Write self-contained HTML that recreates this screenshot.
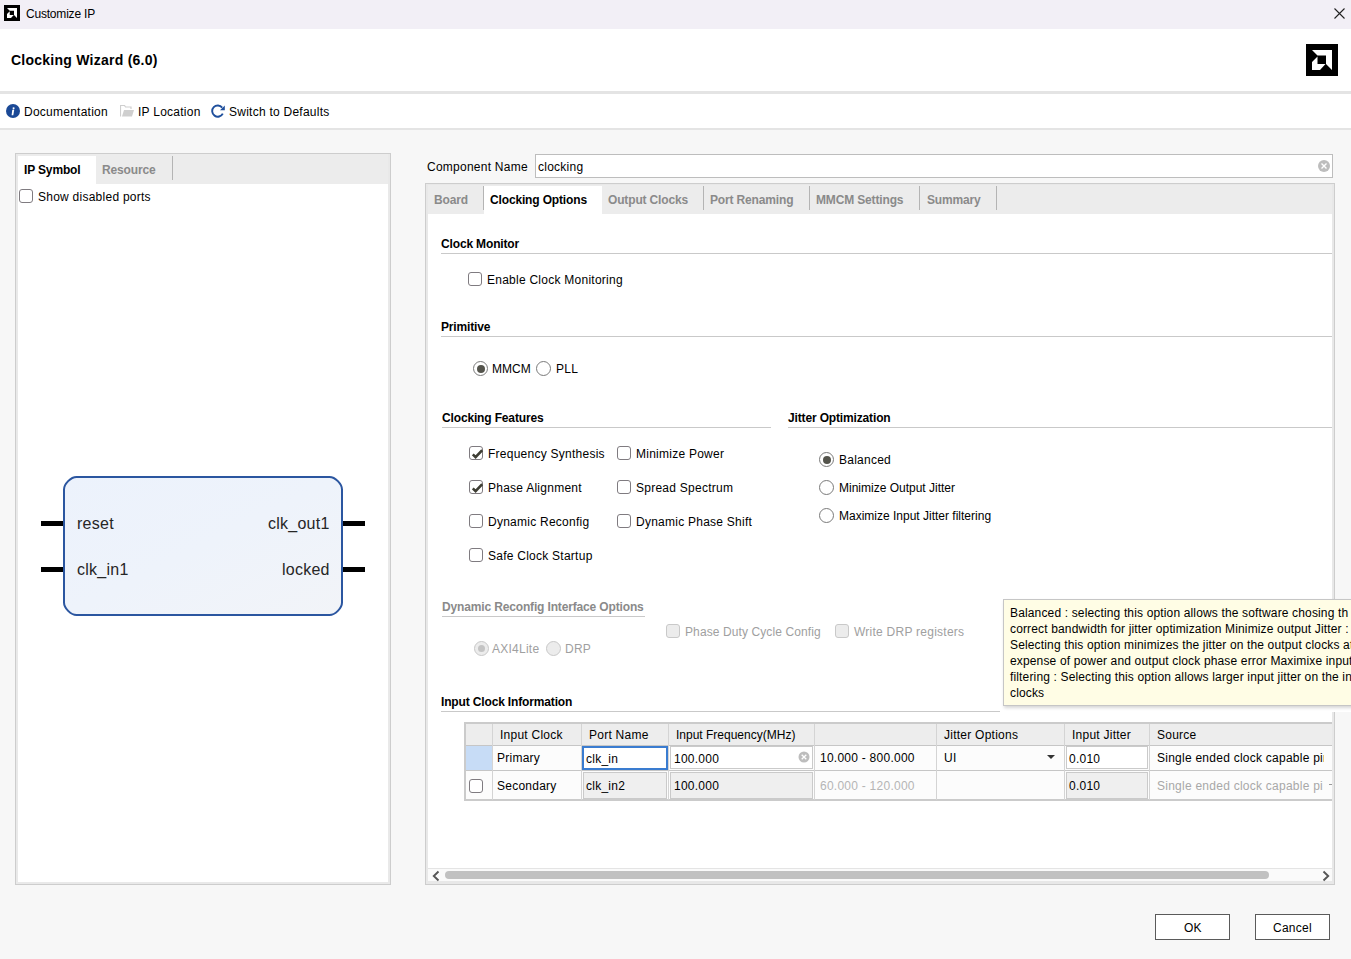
<!DOCTYPE html>
<html><head><meta charset="utf-8">
<style>
*{margin:0;padding:0;box-sizing:border-box}
html,body{width:1351px;height:959px;overflow:hidden;background:#f7f7f7;font-family:"Liberation Sans",sans-serif;font-size:12px;color:#000}
.a{position:absolute}
.t{position:absolute;white-space:nowrap;line-height:12px;font-size:12px;letter-spacing:0.25px}
.b{font-weight:bold;letter-spacing:-0.15px}
.g{color:#8a8a8a}
.cb{position:absolute;width:14px;height:14px;border:1px solid #7f7b80;border-radius:3px;background:#fff}
.cbd{position:absolute;width:14px;height:14px;border:1px solid #c9c9c9;border-radius:3px;background:#ececec}
.rd{position:absolute;width:15px;height:15px;border:1px solid #7a7a7a;border-radius:50%;background:#fff}
.rdd{position:absolute;width:15px;height:15px;border:1px solid #c8c8c8;border-radius:50%;background:#ececec}
.hl{position:absolute;height:1px;background:#c9c9c9}
.vs{position:absolute;width:1px;background:#b4b4b4}
</style></head><body>
<!-- title bar -->
<div class="a" style="left:0;top:0;width:1351px;height:29px;background:#f2eff6"></div>
<svg class="a" style="left:4px;top:5px" width="16" height="16" viewBox="0 0 32 32"><rect width="32" height="32" fill="#000"/><path d="M6 6H26V26L20 20V11.5H11.5Z" fill="#fff"/><path d="M6 18L11.5 12.5V20H19.5L14 26H6Z" fill="#fff"/></svg>
<div class="t" style="left:26px;top:8px;font-size:12px;letter-spacing:-0.2px">Customize IP</div>
<svg class="a" style="left:1334px;top:7.5px" width="11" height="11" viewBox="0 0 11 11"><path d="M0.5 0.5L10.5 10.5M10.5 0.5L0.5 10.5" stroke="#222" stroke-width="1.1"/></svg>
<!-- header -->
<div class="a" style="left:0;top:29px;width:1351px;height:62px;background:#fff"></div>
<div class="t b" style="left:11px;top:53px;font-size:14px;line-height:14px;letter-spacing:0.25px">Clocking Wizard (6.0)</div>
<svg class="a" style="left:1306px;top:44px" width="32" height="32" viewBox="0 0 32 32"><rect width="32" height="32" fill="#000"/><path d="M6 6H26V26L20 20V11.5H11.5Z" fill="#fff"/><path d="M6 18L11.5 12.5V20H19.5L14 26H6Z" fill="#fff"/></svg>
<div class="a" style="left:0;top:91px;width:1351px;height:3px;background:#e4e4e4"></div>
<!-- toolbar -->
<div class="a" style="left:0;top:94px;width:1351px;height:34px;background:#fff"></div>
<div class="a" style="left:0;top:128px;width:1351px;height:2px;background:#e4e4e4"></div>
<svg class="a" style="left:6px;top:104px" width="14" height="14" viewBox="0 0 14 14"><circle cx="7" cy="7" r="7" fill="#1b4996"/><path d="M7.6 3.2a1 1 0 1 0 0.01 0Z" fill="#fff"/><path d="M6.3 5.8H8.2L7.3 11.2H5.6Z" fill="#fff"/></svg>
<div class="t" style="left:24px;top:106px">Documentation</div>
<svg class="a" style="left:120px;top:105px" width="14" height="12" viewBox="0 0 14 12"><path d="M0.5 11.5V0.5H4.5L5.5 2H11V4" fill="none" stroke="#cfcfcf" stroke-width="1.2"/><path d="M2 11.5L4 5H14L12 11.5Z" fill="#cfcfcf"/></svg>
<div class="t" style="left:138px;top:106px">IP Location</div>
<svg class="a" style="left:211px;top:104px" width="14" height="14" viewBox="0 0 14 14"><path d="M11.8 9.6A5.6 5.6 0 1 1 11.2 3.6" fill="none" stroke="#1f4f9c" stroke-width="1.9"/><path d="M13.8 1.5V6.3H9.0Z" fill="#1f4f9c"/></svg>
<div class="t" style="left:229px;top:106px">Switch to Defaults</div>

<!-- left panel -->
<div class="a" style="left:15px;top:153px;width:376px;height:732px;border:1px solid #cdcdcd;background:#e9e9e9"></div>
<div class="a" style="left:18px;top:156px;width:370px;height:726px;background:#fff"></div>
<div class="a" style="left:18px;top:154px;width:370px;height:30px;background:#ececec"></div>
<div class="a" style="left:18px;top:156px;width:78px;height:28px;background:#fff"></div>
<div class="vs" style="left:172px;top:156px;height:24px"></div>
<div class="t b" style="left:24px;top:164px">IP Symbol</div>
<div class="t b g" style="left:102px;top:164px">Resource</div>
<div class="cb" style="left:19px;top:189px"></div>
<div class="t" style="left:38px;top:191px">Show disabled ports</div>
<!-- symbol -->
<div class="a" style="left:41px;top:521px;width:23px;height:5px;background:#000"></div>
<div class="a" style="left:41px;top:567px;width:23px;height:5px;background:#000"></div>
<div class="a" style="left:341px;top:521px;width:24px;height:5px;background:#000"></div>
<div class="a" style="left:341px;top:567px;width:24px;height:5px;background:#000"></div>
<svg class="a" style="left:60px;top:473px" width="290" height="146" viewBox="0 0 290 146"><defs><linearGradient id="bx" x1="0" y1="0" x2="1" y2="1"><stop offset="0" stop-color="#ecf2fc"/><stop offset="0.5" stop-color="#eef3fb"/><stop offset="1" stop-color="#f2f4f8"/></linearGradient></defs><path d="M16.5 4H269.5C275.125 4 282 10.875 282 16.5V129.5C282 135.125 275.125 142 269.5 142H16.5C10.875 142 4 135.125 4 129.5V16.5C4 10.875 10.875 4 16.5 4Z" fill="url(#bx)" stroke="#2b56a0" stroke-width="2"/></svg>
<div class="t" style="left:77px;top:516px;font-size:16px;line-height:16px;color:#262626">reset</div>
<div class="t" style="left:77px;top:562px;font-size:16px;line-height:16px;color:#262626">clk_in1</div>
<div class="t" style="left:268px;top:516px;font-size:16px;line-height:16px;color:#262626">clk_out1</div>
<div class="t" style="left:282px;top:562px;font-size:16px;line-height:16px;color:#262626">locked</div>

<!-- component name -->
<div class="t" style="left:427px;top:161px">Component Name</div>
<div class="a" style="left:535px;top:154px;width:798px;height:24px;border:1px solid #bdbdbd;background:#fff"></div>
<div class="t" style="left:538px;top:161px">clocking</div>
<svg class="a" style="left:1318px;top:160px" width="12" height="12" viewBox="0 0 12 12"><circle cx="6" cy="6" r="6" fill="#bdbdbd"/><path d="M3.5 3.5L8.5 8.5M8.5 3.5L3.5 8.5" stroke="#fff" stroke-width="1.4"/></svg>

<!-- tab panel -->
<div class="a" style="left:425px;top:183px;width:910px;height:702px;border:1px solid #cdcdcd;background:#e8e8e8"></div>
<div class="a" style="left:428px;top:185px;width:904px;height:683px;background:#fff;overflow:hidden">
<div class="a" style="left:-428px;top:-185px;width:1351px;height:959px">
<!-- tab header -->
<div class="a" style="left:428px;top:185px;width:904px;height:29px;background:#ececec"></div>
<div class="a" style="left:484px;top:186px;width:118px;height:28px;background:#fff"></div>
<div class="vs" style="left:483px;top:186px;height:24px"></div>
<div class="vs" style="left:703px;top:186px;height:24px"></div>
<div class="vs" style="left:809px;top:186px;height:24px"></div>
<div class="vs" style="left:919px;top:186px;height:24px"></div>
<div class="vs" style="left:996px;top:186px;height:24px"></div>
<div class="t b g" style="left:434px;top:194px">Board</div>
<div class="t b" style="left:490px;top:194px">Clocking Options</div>
<div class="t b g" style="left:608px;top:194px">Output Clocks</div>
<div class="t b g" style="left:710px;top:194px">Port Renaming</div>
<div class="t b g" style="left:816px;top:194px">MMCM Settings</div>
<div class="t b g" style="left:927px;top:194px">Summary</div>

<!-- clock monitor -->
<div class="t b" style="left:441px;top:238px">Clock Monitor</div>
<div class="hl" style="left:441px;top:253px;width:900px"></div>
<div class="cb" style="left:468px;top:272px"></div>
<div class="t" style="left:487px;top:274px">Enable Clock Monitoring</div>

<!-- primitive -->
<div class="t b" style="left:441px;top:321px">Primitive</div>
<div class="hl" style="left:441px;top:336px;width:900px"></div>
<div class="rd" style="left:473px;top:361px"><div class="a" style="left:2.5px;top:2.5px;width:8px;height:8px;border-radius:50%;background:#54544c"></div></div>
<div class="t" style="left:492px;top:363px;letter-spacing:0">MMCM</div>
<div class="rd" style="left:536px;top:361px"></div>
<div class="t" style="left:556px;top:363px">PLL</div>

<!-- clocking features -->
<div class="t b" style="left:442px;top:412px">Clocking Features</div>
<div class="hl" style="left:442px;top:427px;width:329px"></div>
<div class="t b" style="left:788px;top:412px">Jitter Optimization</div>
<div class="hl" style="left:788px;top:427px;width:560px"></div>

<div class="cb" style="left:469px;top:446px"><svg class="a" style="left:1px;top:1px" width="12" height="12" viewBox="0 0 12 12"><path d="M1.8 6.3L4.6 9.2L11.2 2.2" fill="none" stroke="#3e3e34" stroke-width="2.6"/></svg></div>
<div class="t" style="left:488px;top:448px">Frequency Synthesis</div>
<div class="cb" style="left:469px;top:480px"><svg class="a" style="left:1px;top:1px" width="12" height="12" viewBox="0 0 12 12"><path d="M1.8 6.3L4.6 9.2L11.2 2.2" fill="none" stroke="#3e3e34" stroke-width="2.6"/></svg></div>
<div class="t" style="left:488px;top:482px">Phase Alignment</div>
<div class="cb" style="left:469px;top:514px"></div>
<div class="t" style="left:488px;top:516px">Dynamic Reconfig</div>
<div class="cb" style="left:469px;top:548px"></div>
<div class="t" style="left:488px;top:550px">Safe Clock Startup</div>
<div class="cb" style="left:617px;top:446px"></div>
<div class="t" style="left:636px;top:448px">Minimize Power</div>
<div class="cb" style="left:617px;top:480px"></div>
<div class="t" style="left:636px;top:482px">Spread Spectrum</div>
<div class="cb" style="left:617px;top:514px"></div>
<div class="t" style="left:636px;top:516px">Dynamic Phase Shift</div>

<div class="rd" style="left:819px;top:452px"><div class="a" style="left:2.5px;top:2.5px;width:8px;height:8px;border-radius:50%;background:#54544c"></div></div>
<div class="t" style="left:839px;top:454px">Balanced</div>
<div class="rd" style="left:819px;top:480px"></div>
<div class="t" style="left:839px;top:482px;letter-spacing:0">Minimize Output Jitter</div>
<div class="rd" style="left:819px;top:508px"></div>
<div class="t" style="left:839px;top:510px;letter-spacing:0">Maximize Input Jitter filtering</div>

<!-- dynamic reconfig -->
<div class="t b g" style="left:442px;top:601px">Dynamic Reconfig Interface Options</div>
<div class="hl" style="left:442px;top:616px;width:203px"></div>
<div class="rdd" style="left:474px;top:641px"><div class="a" style="left:3px;top:3px;width:7px;height:7px;border-radius:50%;background:#c4c4c4"></div></div>
<div class="t g" style="left:492px;top:643px;color:#a0a0a0">AXI4Lite</div>
<div class="rdd" style="left:546px;top:641px"></div>
<div class="t g" style="left:565px;top:643px;color:#a0a0a0">DRP</div>
<div class="cbd" style="left:666px;top:624px"></div>
<div class="t" style="left:685px;top:626px;color:#a0a0a0;letter-spacing:0.1px">Phase Duty Cycle Config</div>
<div class="cbd" style="left:835px;top:624px"></div>
<div class="t" style="left:854px;top:626px;color:#a0a0a0">Write DRP registers</div>

<!-- input clock info -->
<div class="t b" style="left:441px;top:696px">Input Clock Information</div>
<div class="hl" style="left:441px;top:711px;width:559px"></div>
<!-- table -->
<div class="a" style="left:464px;top:722px;width:880px;height:79px;border:2px solid #cbcbcb;border-right:none;background:#fcfcfc"></div>
<div class="a" style="left:466px;top:724px;width:880px;height:21px;background:#ededed"></div>
<div class="a" style="left:466px;top:745px;width:880px;height:1px;background:#c6c6c6"></div>
<div class="a" style="left:466px;top:770px;width:880px;height:1px;background:#c6c6c6"></div>
<div class="a" style="left:466px;top:746px;width:26px;height:24px;background:#c7dcf6"></div>
<div class="a" style="left:492px;top:724px;width:1px;height:76px;background:#d4d4d4"></div>
<div class="a" style="left:581px;top:724px;width:1px;height:76px;background:#d4d4d4"></div>
<div class="a" style="left:668px;top:724px;width:1px;height:76px;background:#d4d4d4"></div>
<div class="a" style="left:814px;top:724px;width:1px;height:76px;background:#d4d4d4"></div>
<div class="a" style="left:936px;top:724px;width:1px;height:76px;background:#d4d4d4"></div>
<div class="a" style="left:1064px;top:724px;width:1px;height:76px;background:#d4d4d4"></div>
<div class="a" style="left:1149px;top:724px;width:1px;height:76px;background:#d4d4d4"></div>
<div class="t" style="left:500px;top:729px">Input Clock</div>
<div class="t" style="left:589px;top:729px">Port Name</div>
<div class="t" style="left:676px;top:729px;letter-spacing:0">Input Frequency(MHz)</div>
<div class="t" style="left:944px;top:729px">Jitter Options</div>
<div class="t" style="left:1072px;top:729px">Input Jitter</div>
<div class="t" style="left:1157px;top:729px">Source</div>
<div class="t" style="left:497px;top:752px">Primary</div>
<div class="a" style="left:582px;top:746px;width:86px;height:24px;border:2px solid #3a7cd0;background:#fff"></div>
<div class="t" style="left:586px;top:753px">clk_in</div>
<div class="a" style="left:670px;top:746px;width:143px;height:23px;border:1px solid #cacaca;background:#fff"></div>
<div class="t" style="left:674px;top:753px">100.000</div>
<svg class="a" style="left:798px;top:751px" width="12" height="12" viewBox="0 0 12 12"><circle cx="6" cy="6" r="5.5" fill="#bdbdbd"/><path d="M3.7 3.7L8.3 8.3M8.3 3.7L3.7 8.3" stroke="#fff" stroke-width="1.3"/></svg>
<div class="t" style="left:820px;top:752px">10.000 - 800.000</div>
<div class="t" style="left:944px;top:752px">UI</div>
<svg class="a" style="left:1047px;top:755px" width="8" height="4" viewBox="0 0 8 4"><path d="M0 0H8L4 4Z" fill="#333"/></svg>
<div class="a" style="left:1066px;top:746px;width:82px;height:23px;border:1px solid #cacaca;background:#fff"></div>
<div class="t" style="left:1069px;top:753px">0.010</div>
<div class="a" style="left:1157px;top:746px;width:167px;height:24px;overflow:hidden"><div class="t" style="left:0;top:6px">Single ended clock capable pin</div></div>
<div class="cb" style="left:469px;top:779px"></div>
<div class="t" style="left:497px;top:780px">Secondary</div>
<div class="a" style="left:583px;top:772px;width:84px;height:27px;border:1px solid #cacaca;background:#efefef"></div>
<div class="t" style="left:586px;top:780px">clk_in2</div>
<div class="a" style="left:670px;top:772px;width:143px;height:27px;border:1px solid #cacaca;background:#efefef"></div>
<div class="t" style="left:674px;top:780px">100.000</div>
<div class="t" style="left:820px;top:780px;color:#b5b5b5">60.000 - 120.000</div>
<div class="a" style="left:1066px;top:772px;width:82px;height:27px;border:1px solid #cacaca;background:#efefef"></div>
<div class="t" style="left:1069px;top:780px">0.010</div>
<div class="t" style="left:1157px;top:780px;color:#a8a8a8">Single ended clock capable pi</div>
<div class="a" style="left:1329px;top:784px;width:3px;height:1px;background:#999"></div>

</div></div>
<!-- scrollbar -->
<div class="a" style="left:428px;top:868px;width:904px;height:1px;background:#e4e4e4"></div>
<div class="a" style="left:428px;top:869px;width:904px;height:12px;background:#fafafa"></div>
<div class="a" style="left:445px;top:871px;width:824px;height:8px;border-radius:4px;background:#c1c1c1"></div>
<svg class="a" style="left:432px;top:870px" width="9" height="12" viewBox="0 0 9 12"><path d="M6.5 1.5L1.8 6L6.5 10.5" fill="none" stroke="#555" stroke-width="1.9"/></svg>
<svg class="a" style="left:1322px;top:870px" width="9" height="12" viewBox="0 0 9 12"><path d="M1.5 1.5L6.2 6L1.5 10.5" fill="none" stroke="#555" stroke-width="1.9"/></svg>
<!-- tooltip -->
<div class="a" style="left:1000px;top:599px;width:351px;height:113px;background:#fff"></div>
<div class="a" style="left:1003px;top:599px;width:360px;height:107px;border:1px solid #c6c6c6;background:#fffde5;box-shadow:1px 2px 3px rgba(0,0,0,0.16)"></div>
<div class="t" style="left:1010px;top:605px;line-height:16px;letter-spacing:0.15px">Balanced : selecting this option allows the software chosing th<br>correct bandwidth for jitter optimization Minimize output Jitter :<br>Selecting this option minimizes the jitter on the output clocks at<br>expense of power and output clock phase error Maximixe input<br>filtering : Selecting this option allows larger input jitter on the in<br>clocks</div>
<!-- buttons -->
<div class="a" style="left:1155px;top:914px;width:75px;height:26px;border:1px solid #5a5a5a;background:#fff"></div>
<div class="t" style="left:1184px;top:922px">OK</div>
<div class="a" style="left:1255px;top:914px;width:75px;height:26px;border:1px solid #5a5a5a;background:#fff"></div>
<div class="t" style="left:1273px;top:922px">Cancel</div>
</body></html>
